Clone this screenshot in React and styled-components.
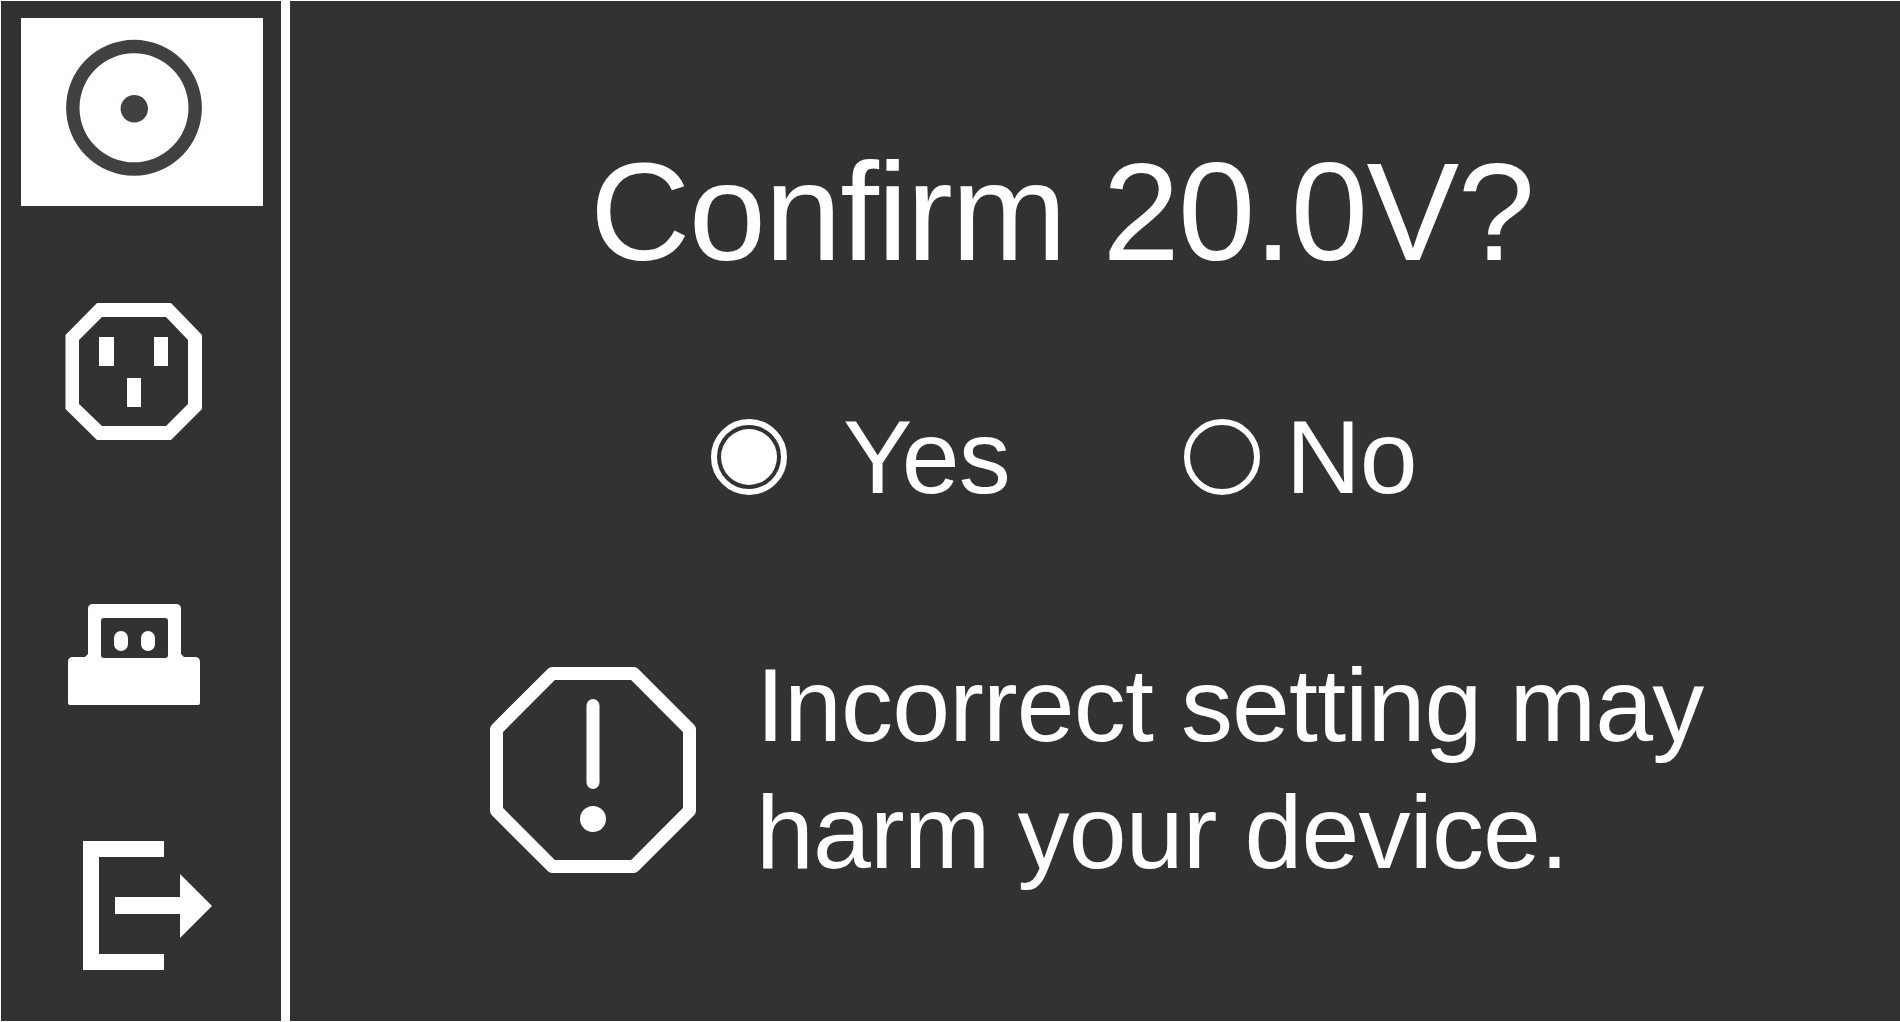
import React from "react";
import styled, { createGlobalStyle } from "styled-components";

const Global = createGlobalStyle`
  html, body { margin: 0; padding: 0; background: #fff; }
  body { width: 1900px; height: 1022px; overflow: hidden; font-family: "Liberation Sans", Arial, sans-serif; }
`;

const Screen = styled.div`
  width: 1900px;
  height: 1022px;
  box-sizing: border-box;
  padding: 1px 0 1px 1px;
  background: #fff;
  display: flex;
  gap: 9px;
`;

const Sidebar = styled.nav`
  width: 280px;
  background: #323232;
  display: flex;
  flex-direction: column;
`;

const Tile = styled.div`
  box-sizing: border-box;
  flex: none;
  height: ${(p) => p.$h}px;
  margin: ${(p) => p.$mt}px 0 0 ${(p) => (p.$active ? 20 : 0)}px;
  width: ${(p) => (p.$active ? "242px" : "100%")};
  background: ${(p) => (p.$active ? "#fff" : "transparent")};
  color: ${(p) => (p.$active ? "#404241" : "#fff")};
`;

const TileIcon = styled.svg`
  display: block;
  shape-rendering: geometricPrecision;
`;

const Main = styled.main`
  flex: 1;
  background: #323232;
  color: #fff;
  display: flex;
  flex-direction: column;
  align-items: flex-start;
`;

const Title = styled.h1`
  margin: 141px 0 0 300px;
  font-weight: 400;
  font-size: 139px;
  line-height: 139px;
  letter-spacing: -1.6px;
  white-space: nowrap;
`;

const Options = styled.div`
  margin: 122px 0 0 421px;
  display: flex;
  align-items: center;
`;

const Option = styled.label`
  display: flex;
  align-items: center;
  gap: ${(p) => p.$gap}px;
  margin-right: ${(p) => p.$mr}px;
  font-size: 104px;
  letter-spacing: -1px;
`;

const OptionLabel = styled.span`
  display: block;
  padding-top: 2px;
  line-height: 105px;
`;

const Radio = styled.span`
  box-sizing: border-box;
  width: 76px;
  height: 76px;
  border-radius: 50%;
  border: 6px solid #fff;
  display: flex;
  align-items: center;
  justify-content: center;
  flex: none;
`;

const RadioDot = styled.span`
  width: 56px;
  height: 56px;
  border-radius: 50%;
  background: #fff;
`;

const Warning = styled.div`
  margin: 132px 0 0 200px;
  display: flex;
  align-items: center;
  gap: 60px;
`;

const WarningIcon = styled.svg`
  display: block;
  flex: none;
`;

const WarningText = styled.p`
  margin: 0;
  padding-bottom: 2px;
  font-size: 104px;
  line-height: 127px;
  letter-spacing: -0.85px;
  white-space: nowrap;
`;

export default function App() {
  return (
    <Screen>
      <Global />
      <Sidebar>
        <Tile $active $mt={17} $h={188}>
          <TileIcon width="242" height="188" viewBox="21 18 242 188">
            <path
              fill="currentColor"
              fillRule="evenodd"
              d="M66.1 107.8A67.9 67.9 0 1 0 201.9 107.8A67.9 67.9 0 1 0 66.1 107.8ZM79.5 107.8A54.5 54.5 0 1 1 188.5 107.8A54.5 54.5 0 1 1 79.5 107.8Z"
            />
            <circle cx="134.3" cy="108.8" r="13.7" fill="currentColor" />
          </TileIcon>
        </Tile>
        <Tile $mt={0} $h={260}>
          <TileIcon width="280" height="260" viewBox="1 206 280 260">
            <path
              fill="currentColor"
              fillRule="evenodd"
              d="M97 303H171L202 335V409L171 440H97L65.5 409V335ZM102 317L79 340V404L102 426H166L188 404V340L166 317Z"
            />
            <path fill="currentColor" d="M99 337h15v29H99zM154 337h14v29h-14zM127 378h14v29h-14z" />
          </TileIcon>
        </Tile>
        <Tile $mt={0} $h={260}>
          <TileIcon width="280" height="260" viewBox="1 466 280 260">
            <path
              fill="currentColor"
              fillRule="evenodd"
              d="M93 604H176Q181 604 181 609V654L184 657H195Q200 657 200 662V703Q200 705 198 705H70Q68 705 68 703V662Q68 657 73 657H85L88 654V609Q88 604 93 604ZM104 618Q101 618 101 621V655Q101 658 104 658H165Q168 658 168 655V621Q168 618 165 618Z"
            />
            <rect x="114" y="631" width="14" height="20" rx="7" fill="currentColor" />
            <rect x="141" y="631" width="14" height="20" rx="7" fill="currentColor" />
          </TileIcon>
        </Tile>
        <Tile $mt={0} $h={295}>
          <TileIcon width="280" height="295" viewBox="1 726 280 295">
            <path fill="currentColor" d="M83 841H164V857H99V954H164V970H83Z" />
            <path fill="currentColor" d="M115 897H180V874L212 906L180 938V914H115Z" />
          </TileIcon>
        </Tile>
      </Sidebar>
      <Main>
        <Title>Confirm 20.0V?</Title>
        <Options>
          <Option $gap={56} $mr={174}>
            <Radio>
              <RadioDot />
            </Radio>
            <OptionLabel>Yes</OptionLabel>
          </Option>
          <Option $gap={26} $mr={0}>
            <Radio />
            <OptionLabel>No</OptionLabel>
          </Option>
        </Options>
        <Warning>
          <WarningIcon width="206" height="206" viewBox="0 0 206 206">
            <path
              d="M62.3 6.5H143.7L199.5 62.3V143.7L143.7 199.5H62.3L6.5 143.7V62.3Z"
              fill="none"
              stroke="#fff"
              strokeWidth="13"
              strokeLinejoin="round"
            />
            <path d="M103 38.5V115.5" stroke="#fff" strokeWidth="13" strokeLinecap="round" />
            <circle cx="103" cy="152" r="13" fill="#fff" />
          </WarningIcon>
          <WarningText>
            Incorrect setting may
            <br />
            harm your device.
          </WarningText>
        </Warning>
      </Main>
    </Screen>
  );
}
